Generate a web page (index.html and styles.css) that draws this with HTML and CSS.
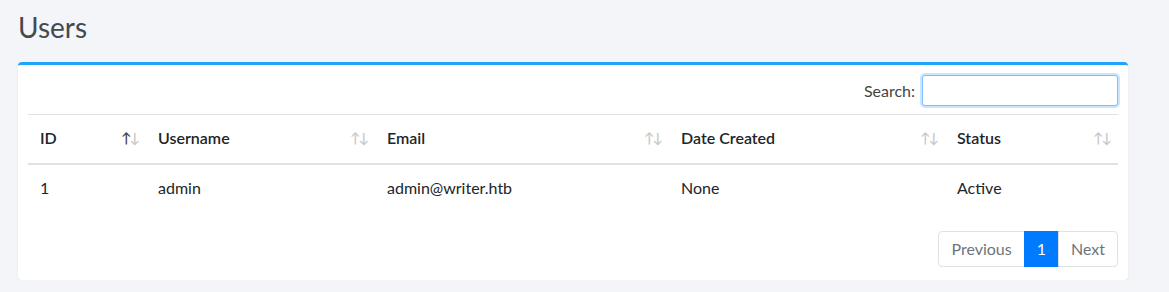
FILE: index.html
```html
<!DOCTYPE html>
<html lang="en">
<head>
<meta charset="UTF-8" />
<title>Users</title>
<link rel="stylesheet" href="styles.css">
</head>
<body>
  <div class="page">
    <h1 class="page-title">Users</h1>
    <div class="card">
      <div class="table-top">
        <label class="search">Search: <input type="search" class="search-input" /></label>
      </div>
      <table class="users-table">
        <thead>
          <tr>
            <th class="col-id">ID<span class="sort"><i class="on">↑</i><i>↓</i></span></th>
            <th class="col-user">Username<span class="sort"><i>↑</i><i>↓</i></span></th>
            <th class="col-email">Email<span class="sort"><i>↑</i><i>↓</i></span></th>
            <th class="col-date">Date Created<span class="sort"><i>↑</i><i>↓</i></span></th>
            <th class="col-status">Status<span class="sort"><i>↑</i><i>↓</i></span></th>
          </tr>
        </thead>
        <tbody>
          <tr>
            <td>1</td>
            <td>admin</td>
            <td>admin@writer.htb</td>
            <td>None</td>
            <td>Active</td>
          </tr>
        </tbody>
      </table>
      <div class="table-bottom">
        <ul class="pagination">
          <li class="page-item"><a href="#">Previous</a></li>
          <li class="page-item active"><a href="#">1</a></li>
          <li class="page-item"><a href="#">Next</a></li>
        </ul>
      </div>
    </div>
  </div>
</body>
</html>
```

FILE: styles.css
```css
body, html {
  margin: 0; padding: 0;
  font-family: Lato, "Open Sans", sans-serif;
  background: #f4f5f9;
  color: #212529;
}
.page {
  padding: 10px 41px 0 18px;
}
.page-title {
  margin: 0 0 17px 0;
  font-size: 28px;
  font-weight: 400;
  line-height: 35px;
  color: #444a50;
}
.card {
  background: #fff;
  border-top: 3px solid #1ea4f8;
  border-radius: 4px;
  box-shadow: 0 1px 2px rgba(0, 0, 0, 0.08);
  padding: 10px 10px 13px 10px;
}
.table-top {
  display: flex;
  justify-content: flex-end;
}
.search {
  display: flex;
  align-items: center;
  gap: 7px;
  font-size: 16px;
  color: #444;
}
.search-input {
  width: 196px;
  height: 31px;
  box-sizing: border-box;
  border: 1px solid #80bdff;
  border-radius: 3px;
  box-shadow: 0 0 0 2px rgba(0, 123, 255, 0.2);
  outline: none;
  margin: 0;
}
.users-table {
  width: 100%;
  border-collapse: collapse;
  margin-top: 8px;
  font-size: 16px;
  table-layout: fixed;
}
.users-table th, .users-table td {
  text-align: left;
  padding: 11px 12px 13px 12px;
  line-height: 24px;
  border-top: 1px solid #dee2e6;
}
.users-table th {
  position: relative;
  font-weight: 600;
  border-bottom: 2px solid #dee2e6;
}
.col-id { width: 94px; }
.col-user { width: 205px; }
.col-email { width: 270px; }
.col-date { width: 252px; }
.sort {
  position: absolute;
  right: 8px;
  top: 11px;
  font-size: 14px;
  letter-spacing: -2px;
}
.sort i {
  font-style: normal;
  color: #c8c8c8;
}
.sort i.on {
  color: #444;
}
.table-bottom {
  display: flex;
  justify-content: flex-end;
  margin-top: 18px;
}
.pagination {
  display: flex;
  list-style: none;
  margin: 0;
  padding: 0;
  font-size: 16px;
}
.page-item a {
  display: block;
  padding: 0 12px;
  line-height: 34px;
  border: 1px solid #dee2e6;
  margin-left: -1px;
  color: #6c757d;
  text-decoration: none;
}
.page-item:first-child a {
  border-radius: 4px 0 0 4px;
}
.page-item:last-child a {
  border-radius: 0 4px 4px 0;
}
.page-item.active a {
  background: #007bff;
  border-color: #007bff;
  color: #fff;
}
```
